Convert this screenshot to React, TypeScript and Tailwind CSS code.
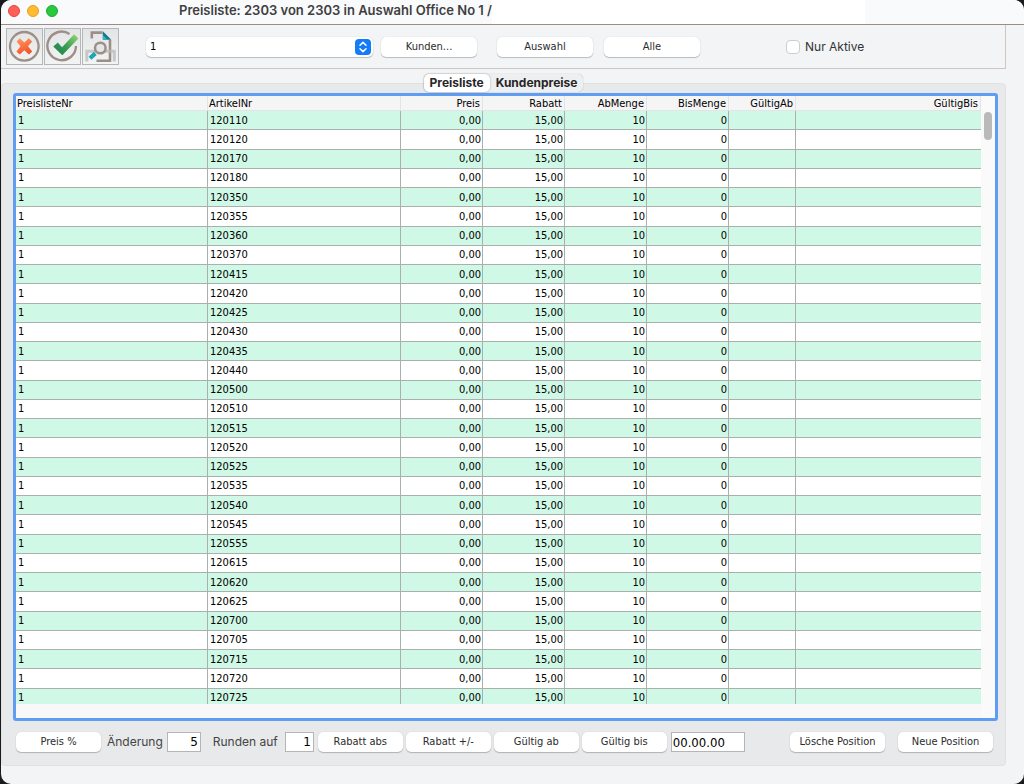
import React, { useState } from "react";

const artikel = [
  "120110", "120120", "120170", "120180", "120350", "120355", "120360", "120370",
  "120415", "120420", "120425", "120430", "120435", "120440", "120500", "120510",
  "120515", "120520", "120525", "120535", "120540", "120545", "120555", "120615",
  "120620", "120625", "120700", "120705", "120715", "120720", "120725",
];

const columns = [
  { name: "PreislisteNr", col: "w-[192px]", align: "text-left" },
  { name: "ArtikelNr", col: "w-[193px]", align: "text-left" },
  { name: "Preis", col: "w-[82px]", align: "text-right" },
  { name: "Rabatt", col: "w-[82px]", align: "text-right" },
  { name: "AbMenge", col: "w-[82px]", align: "text-right" },
  { name: "BisMenge", col: "w-[82px]", align: "text-right" },
  { name: "GültigAb", col: "w-[67px]", align: "text-right" },
  { name: "GültigBis", col: "", align: "text-right" },
];

function Button({ className = "", children }: { className?: string; children: React.ReactNode }) {
  return (
    <button
      className={`h-5 shrink-0 rounded-[5px] bg-white text-center leading-5 text-[#2b2b2b] shadow-[0_0_1px_rgba(0,0,0,0.2),0_1px_1px_rgba(0,0,0,0.22)] ${className}`}
    >
      {children}
    </button>
  );
}

function IconButton({ label, children }: { label: string; children: React.ReactNode }) {
  return (
    <button
      aria-label={label}
      className="flex h-[37px] w-[37px] items-center justify-center border border-[#b4b6b8] bg-linear-to-b from-[#e3e4e5] to-[#f2f3f3]"
    >
      {children}
    </button>
  );
}

function CancelIcon() {
  return (
    <svg width="35" height="35" viewBox="0 0 35 35">
      <defs>
        <linearGradient id="cross" x1="0" y1="0" x2="0.4" y2="1">
          <stop offset="0" stopColor="#ff9a62" />
          <stop offset="1" stopColor="#f4552b" />
        </linearGradient>
      </defs>
      <circle cx="17.3" cy="17.3" r="14.3" fill="none" stroke="#9d8f87" strokeWidth="2.3" />
      <path
        d="M9.6 12.4 L12.8 9.3 L17.3 13.5 L21.8 9.3 L25.2 12.4 L21 17.3 L25.2 22.4 L22 25.6 L17.3 21.3 L12.7 25.6 L9.4 22.4 L13.5 17.3 Z"
        fill="url(#cross)"
      />
    </svg>
  );
}

function OkIcon() {
  return (
    <svg width="35" height="35" viewBox="0 0 35 35">
      <defs>
        <linearGradient id="check" x1="0" y1="1" x2="1" y2="0">
          <stop offset="0" stopColor="#167c48" />
          <stop offset="0.5" stopColor="#3d9f55" />
          <stop offset="1" stopColor="#9bd873" />
        </linearGradient>
      </defs>
      <path d="M24.5 4.9 A14.3 14.3 0 1 0 31 17" fill="none" stroke="#9d8f87" strokeWidth="2.4" />
      <path d="M8.3 17.6 L12.8 13.6 L17 18.2 L29.2 5.2 L33.4 9.6 L17.3 26.3 Z" fill="url(#check)" />
    </svg>
  );
}

function PreviewIcon() {
  return (
    <svg width="35" height="35" viewBox="0 0 35 35">
      <path d="M8.8 9.5 V3.6 H19.5" fill="none" stroke="#9d8f87" strokeWidth="2.6" />
      <path d="M27 11 V31.8 H13.5" fill="none" stroke="#9d8f87" strokeWidth="2.6" />
      <path d="M3.8 32.5 V22.3 H31.3 V32.5" fill="none" stroke="#b9b9bb" strokeOpacity="0.75" strokeWidth="3" />
      <path d="M19.8 2.3 L28.3 10.8 H19.8 Z" fill="#12798c" />
      <path d="M19.8 6 L24.6 10.8 H19.8 Z" fill="#3fb3c2" />
      <circle cx="17.3" cy="19" r="5.3" fill="#e6e6e7" stroke="#9d8f87" strokeWidth="2.5" />
      <path d="M7 29.3 L12.3 24.4" stroke="#1ba5b8" strokeWidth="4.2" />
    </svg>
  );
}

export default function App() {
  const [aktive, setAktive] = useState(false);
  const [tab, setTab] = useState("Preisliste");

  return (
    <div className="h-screen bg-[#1b1b1b] pl-px font-['DejaVu_Sans_Condensed','DejaVu_Sans',sans-serif] text-[11px] text-black">
      <div className="flex h-full flex-col overflow-hidden rounded-[10px] bg-[#f3f4f6]">
        {/* Title bar */}
        <header className="flex h-6 shrink-0 bg-[#f9fafc]">
          <div className="flex w-[178px] shrink-0 items-start gap-[7px] pt-[5px] pl-[7px]">
            <span className="h-3 w-3 rounded-full border border-[#e2463f] bg-[#ff5f57]" />
            <span className="h-3 w-3 rounded-full border border-[#e0a123] bg-[#febc2e]" />
            <span className="h-3 w-3 rounded-full border border-[#1aab29] bg-[#28c840]" />
          </div>
          <h1 className="shrink-0 font-[Inter,sans-serif] text-[13px] leading-5 font-semibold text-[#3f3f3f]">
            Preisliste: 2303 von 2303 in Auswahl Office No 1 /
          </h1>
          <div className="mr-[159px] flex-1 bg-white" />
        </header>

        {/* Toolbar */}
        <div className="shrink-0 border-t border-[#9c8c85] pr-[18px]">
          <div className="flex h-[44px] items-center border-r border-b border-[#cfc6c2] pl-[5px]">
            <div className="flex gap-px">
              <IconButton label="Abbrechen"><CancelIcon /></IconButton>
              <IconButton label="OK"><OkIcon /></IconButton>
              <IconButton label="Vorschau"><PreviewIcon /></IconButton>
            </div>
            <div className="relative ml-[27px] w-[227px]">
              <select
                aria-label="Preisliste"
                className="block h-5 w-full appearance-none rounded-[5px] bg-white pl-1 leading-5 shadow-[0_0_1px_rgba(0,0,0,0.2),0_1px_1px_rgba(0,0,0,0.22)]"
              >
                <option>1</option>
              </select>
              <svg className="pointer-events-none absolute top-[2px] right-[2px]" width="16" height="16" viewBox="0 0 16 16">
                <rect width="16" height="16" rx="4" fill="#147cf8" />
                <path d="M5 6.3 L8 3.4 L11 6.3 M5 9.7 L8 12.6 L11 9.7" fill="none" stroke="#fff" strokeWidth="1.5" strokeLinecap="round" strokeLinejoin="round" />
              </svg>
            </div>
            <Button className="ml-2 w-24">Kunden...</Button>
            <Button className="ml-5 w-24">Auswahl</Button>
            <Button className="ml-[11px] w-24">Alle</Button>
            <label className="ml-[86px] flex items-center gap-[5px] font-[Inter,sans-serif] text-[12px] text-[#333]">
              <input
                type="checkbox"
                checked={aktive}
                onChange={(e) => setAktive(e.target.checked)}
                className="h-[14px] w-[14px] appearance-none rounded-[4px] border border-[#cdced0] bg-white checked:bg-[#147cf8]"
              />
              Nur Aktive
            </label>
          </div>
        </div>

        {/* Tab panel */}
        <main className="mt-[14px] mr-[18px] mb-[18px] flex min-h-0 flex-1 flex-col rounded-[4px] border border-[#dfe0e2] bg-[#e8e9eb] pr-[7px] pl-[11px]">
          <div role="tablist" className="z-10 -mt-[10px] mr-1 flex h-[18px] shrink-0 self-center rounded-[5px] bg-[#eeeff1] font-[Inter,sans-serif] text-[12px] leading-[18px] font-bold text-[#262626] shadow-[0_0_1px_rgba(0,0,0,0.35)]">
            {["Preisliste", "Kundenpreise"].map((name) => (
              <button
                key={name}
                role="tab"
                aria-selected={tab === name}
                onClick={() => setTab(name)}
                className={
                  tab === name
                    ? "rounded-[5px] bg-white px-[6px] shadow-[0_0_2px_rgba(0,0,0,0.35)]"
                    : "px-[6px]"
                }
              >
                {name}
              </button>
            ))}
          </div>

          {/* Price list */}
          <div className="mt-px flex min-h-0 flex-1 rounded-[3px] border-3 border-[#5f9df3] bg-[#f8f8f8]">
            <div className="mb-[14px] min-w-0 flex-1 overflow-hidden">
              <table className="h-[612px] w-full table-fixed border-separate border-spacing-0">
                <colgroup>
                  {columns.map((c) => (
                    <col key={c.name} className={c.col} />
                  ))}
                </colgroup>
                <thead>
                  <tr className="h-[15px]">
                    {columns.map((c) => (
                      <th
                        key={c.name}
                        className={`border-r border-b border-[#e4e4e4] bg-[#f5f5f5] pt-[2px] pr-[2px] pb-0 pl-px leading-[12px] font-normal ${c.align}`}
                      >
                        {c.name}
                      </th>
                    ))}
                  </tr>
                </thead>
                <tbody>
                  {artikel.map((nr) => (
                    <tr key={nr} className="h-[19px] odd:bg-[#cff8e6] even:bg-white">
                      {["1", nr, "0,00", "15,00", "10", "0", "", ""].map((value, i) => (
                        <td
                          key={i}
                          className={`border-r border-b border-[#a9b0ad] pt-px pr-px pb-0 pl-[2px] leading-[12px] last:border-r-0 ${columns[i].align}`}
                        >
                          {value}
                        </td>
                      ))}
                    </tr>
                  ))}
                </tbody>
              </table>
            </div>
            <div className="w-[14px] shrink-0 bg-[#fafafa] pt-4 pl-[3px]">
              <div className="h-7 w-2 rounded-full bg-[#bababa]" />
            </div>
          </div>

          {/* Actions */}
          <footer className="flex h-11 shrink-0 items-center pr-[5px] pb-[2px] pl-[3px]">
            <Button className="w-[85px]">Preis %</Button>
            <label className="ml-[6px] flex items-center gap-1 font-[Inter,sans-serif] text-[12px] whitespace-nowrap text-[#444]">
              Änderung
              <input
                defaultValue="5"
                className="h-5 w-[34px] border border-[#b5b5b5] bg-white pr-[2px] text-right font-['DejaVu_Sans',sans-serif] text-black"
              />
            </label>
            <label className="ml-3 flex items-center gap-[7px] font-[Inter,sans-serif] text-[12px] whitespace-nowrap text-[#444]">
              Runden auf
              <input
                defaultValue="1"
                className="h-5 w-[29px] border border-[#b5b5b5] bg-white pr-[2px] text-right font-['DejaVu_Sans',sans-serif] text-black"
              />
            </label>
            <div className="ml-1 flex gap-[3px]">
              <Button className="w-[85px]">Rabatt abs</Button>
              <Button className="w-[85px]">Rabatt +/-</Button>
              <Button className="w-[85px]">Gültig ab</Button>
              <Button className="w-[85px]">Gültig bis</Button>
            </div>
            <input
              aria-label="Datum"
              defaultValue="00.00.00"
              className="ml-1 h-5 w-[74px] border border-[#b5b5b5] bg-white pl-px font-['DejaVu_Sans_Condensed','DejaVu_Sans',sans-serif] text-[13px]"
            />
            <div className="ml-auto flex gap-[13px]">
              <Button className="w-[95px]">Lösche Position</Button>
              <Button className="w-[95px]">Neue Position</Button>
            </div>
          </footer>
        </main>
      </div>
    </div>
  );
}
